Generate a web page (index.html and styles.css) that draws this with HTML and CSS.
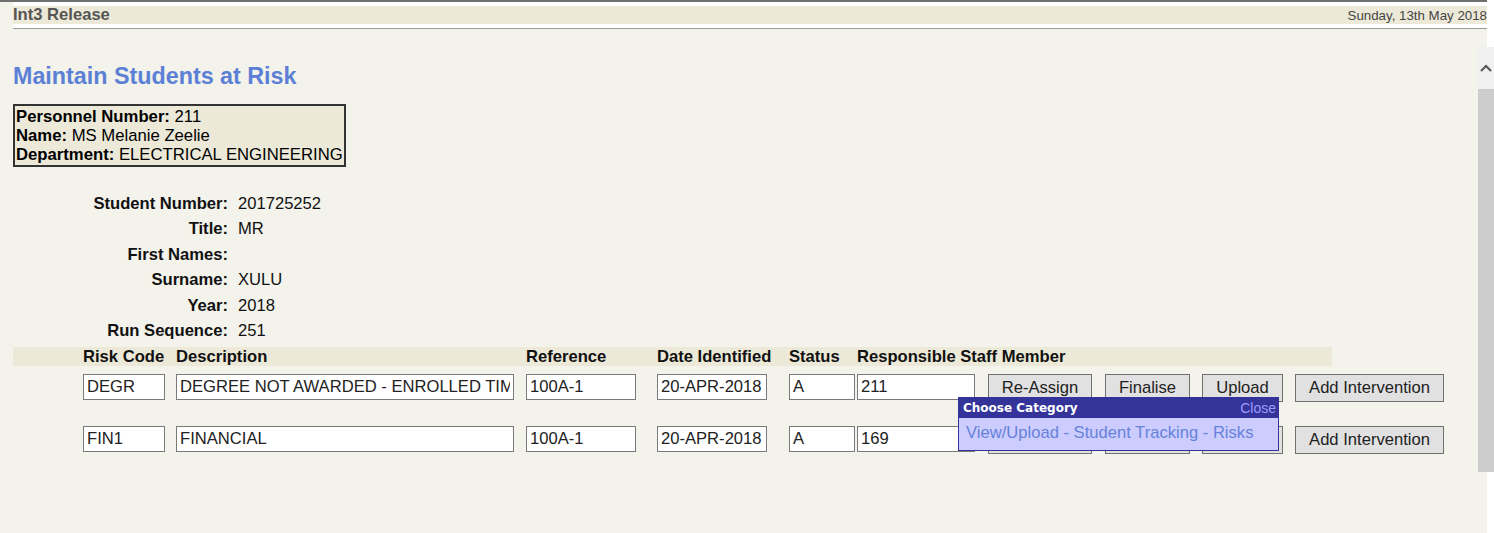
FILE: index.html
```html
<!DOCTYPE html>
<html>
  <head>
    <meta name="viewport" content="width=device-width, initial-scale=1">
    <link rel="stylesheet" href="styles.css">
  </head>
  <body>
    <div class="page">
      <!-- barra do topo -->
      <div class="topbar">
        <div class="release">
          <span class="release-name">Int3 Release</span>
          <span class="release-date">Sunday, 13th May 2018</span>
        </div>
      </div>

      <h1>Maintain Students at Risk</h1>

      <div class="personnel">
        <div><b>Personnel Number:</b> 211</div>
        <div><b>Name:</b> MS Melanie Zeelie</div>
        <div><b>Department:</b> ELECTRICAL ENGINEERING</div>
      </div>

      <div class="details">
        <div class="lbl">Student Number:</div><div>201725252</div>
        <div class="lbl">Title:</div><div>MR</div>
        <div class="lbl">First Names:</div><div></div>
        <div class="lbl">Surname:</div><div>XULU</div>
        <div class="lbl">Year:</div><div>2018</div>
        <div class="lbl">Run Sequence:</div><div>251</div>
      </div>

      <div class="risks">
        <div class="risk-row risk-head">
          <div></div>
          <div>Risk Code</div>
          <div>Description</div>
          <div>Reference</div>
          <div>Date Identified</div>
          <div>Status</div>
          <div>Responsible Staff Member</div>
        </div>

        <div class="risk-row">
          <div></div>
          <div><input class="fld w-code" value="DEGR"></div>
          <div><input class="fld w-desc" value="DEGREE NOT AWARDED - ENROLLED TIME EXCEEDED"></div>
          <div><input class="fld w-ref" value="100A-1"></div>
          <div><input class="fld w-date" value="20-APR-2018"></div>
          <div><input class="fld w-stat" value="A"></div>
          <div><input class="fld w-resp" value="211"></div>
          <div><button class="btn w-reassign">Re-Assign</button></div>
          <div><button class="btn w-final">Finalise</button></div>
          <div><button class="btn w-upload">Upload</button></div>
          <div><button class="btn w-add">Add Intervention</button></div>
        </div>

        <div class="risk-row">
          <div></div>
          <div><input class="fld w-code" value="FIN1"></div>
          <div><input class="fld w-desc" value="FINANCIAL"></div>
          <div><input class="fld w-ref" value="100A-1"></div>
          <div><input class="fld w-date" value="20-APR-2018"></div>
          <div><input class="fld w-stat" value="A"></div>
          <div><input class="fld w-resp" value="169"></div>
          <div><button class="btn w-reassign"></button></div>
          <div><button class="btn w-final"></button></div>
          <div><button class="btn w-upload"></button></div>
          <div><button class="btn w-add">Add Intervention</button></div>
        </div>

        <!-- menu de categoria aberto -->
        <div class="popup">
          <div class="popup-head">
            <span class="popup-title">Choose Category</span>
            <span class="popup-close">Close</span>
          </div>
          <div class="popup-body">View/Upload - Student Tracking - Risks</div>
        </div>
      </div>
    </div>

    <div class="scrollbar">
      <div class="scroll-up">
        <svg width="16" height="12" viewBox="0 0 16 12"><polyline points="3,9 8,4 13,9" fill="none" stroke="#555" stroke-width="2"/></svg>
      </div>
      <div class="scroll-thumb"></div>
    </div>
  </body>
</html>
```

FILE: styles.css
```css
html, body {
  margin: 0;
  height: 100%;
  background-color: #ffffff;
  font-family: "Liberation Sans", Arial, sans-serif;
  color: #111;
  overflow: hidden;
}

.page {
  width: 1487px;
  min-height: 533px;
  background-color: #f3f2eb;
  border-top: 2px solid #6f6f6f;
  box-sizing: border-box;
}

.topbar {
  margin-left: 13px;
  padding: 4px 0;
  background-color: #ffffff;
  border-bottom: 1px solid #9a9a9a;
}

.release {
  display: flex;
  justify-content: space-between;
  align-items: center;
  height: 18px;
  background-color: #ece9d8;
}

.release-name {
  font-weight: bold;
  font-size: 16.6px;
  color: #555;
}

.release-date {
  font-size: 13.3px;
  color: #444;
}

h1 {
  margin: 35px 0 0 13px;
  font-size: 23.3px;
  line-height: 24px;
  color: #5b80d6;
}

.personnel {
  display: inline-block;
  margin: 16px 0 0 13px;
  padding: 1px;
  border: 2px solid #333;
  background-color: #ece9d8;
  font-size: 16.7px;
  line-height: 19px;
  color: #000;
}

.details {
  display: grid;
  grid-template-columns: 215px auto;
  column-gap: 10px;
  margin: 24px 0 0 13px;
  font-size: 16.6px;
  line-height: 25.4px;
}

.details .lbl {
  text-align: right;
  font-weight: bold;
}

.risks {
  position: relative;
  margin: 4px 0 0 13px;
}

.risk-row {
  display: grid;
  grid-template-columns: 70px 93px 350px 131px 132px 68px 131px 117px 97px 93px 149px;
  height: 28px;
  margin-bottom: 24px;
}

.risk-head {
  width: 1319px;
  height: 19px;
  margin-bottom: 8px;
  background-color: #ece9d8;
  font-weight: bold;
  font-size: 16.6px;
  line-height: 19px;
  white-space: nowrap;
}

.fld {
  box-sizing: border-box;
  height: 26px;
  padding: 0 3px;
  border: 1px solid #7a7a7a;
  background: #fff;
  font-family: "Liberation Sans", Arial, sans-serif;
  font-size: 16.6px;
  color: #222;
  outline: none;
}

.w-code { width: 82px; }
.w-desc { width: 338px; }
.w-ref { width: 110px; }
.w-date { width: 110px; }
.w-stat { width: 66px; }
.w-resp { width: 118px; }

.btn {
  box-sizing: border-box;
  height: 28px;
  padding: 0;
  border: 1px solid #707070;
  background-color: #e1e1e1;
  font-family: "Liberation Sans", Arial, sans-serif;
  font-size: 16.6px;
  color: #222;
}

.w-reassign { width: 104px; }
.w-final { width: 85px; }
.w-upload { width: 81px; }
.w-add { width: 149px; }

/* menu flutuante */
.popup {
  position: absolute;
  left: 945px;
  top: 50px;
  width: 321px;
  border: 1px solid #333399;
  box-sizing: border-box;
}

.popup-head {
  display: flex;
  justify-content: space-between;
  align-items: center;
  height: 20px;
  padding: 0 2px 0 4px;
  background-color: #333399;
}

.popup-title {
  font-family: "DejaVu Sans", sans-serif;
  font-weight: bold;
  font-size: 12px;
  color: #fff;
}

.popup-close {
  font-size: 14px;
  color: #9c9cff;
}

.popup-body {
  height: 32px;
  padding-left: 7px;
  background-color: #ccccff;
  font-size: 16.6px;
  line-height: 30px;
  color: #6682d9;
}

.scrollbar {
  position: absolute;
  top: 47px;
  right: 0;
  width: 16px;
  height: 425px;
}

.scroll-up {
  height: 42px;
  background-color: #f0f0f0;
  display: flex;
  justify-content: center;
  align-items: center;
}

.scroll-thumb {
  height: 383px;
  background-color: #cdcdcd;
}
```
